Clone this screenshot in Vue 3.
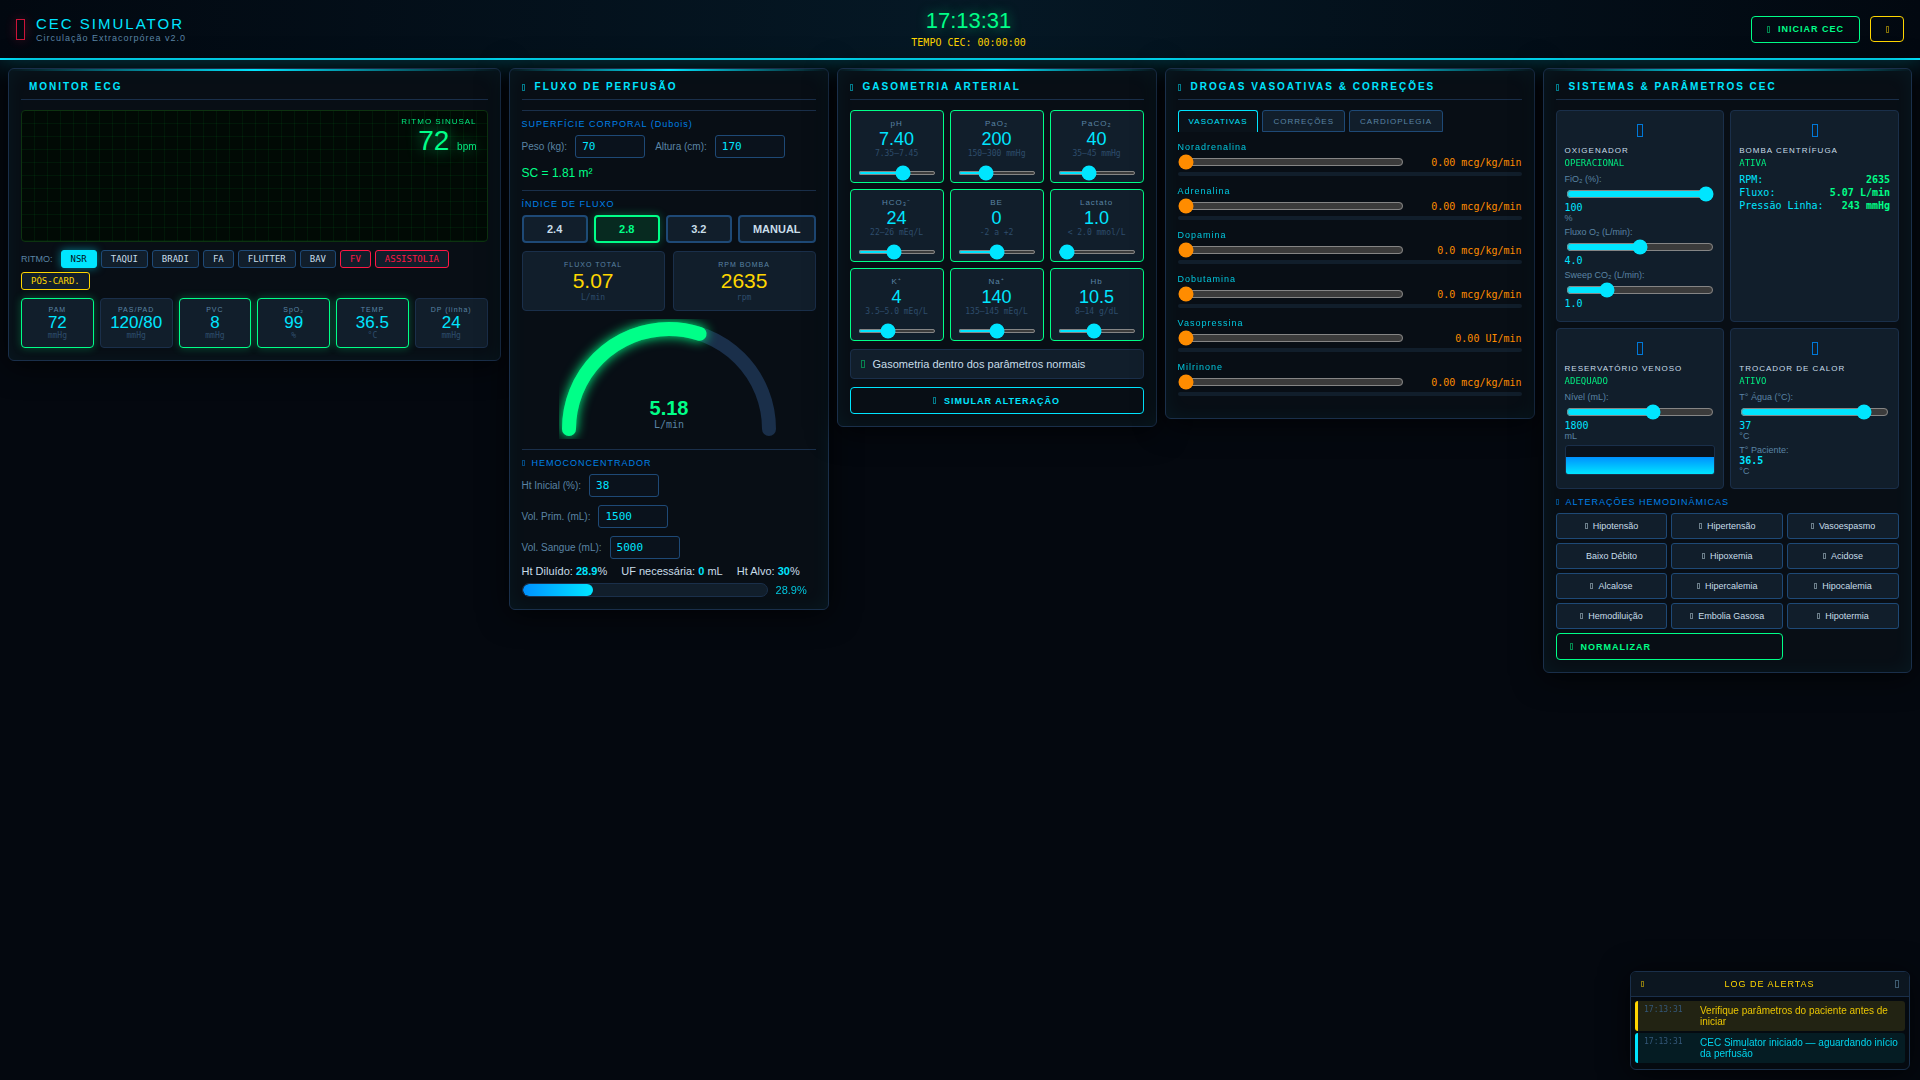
<script setup>
import { ref } from 'vue'

const rhythms = [
  { name: 'NSR', kind: 'active' },
  { name: 'TAQUI' },
  { name: 'BRADI' },
  { name: 'FA' },
  { name: 'FLUTTER' },
  { name: 'BAV' },
  { name: 'FV', kind: 'danger' },
  { name: 'ASSISTOLIA', kind: 'danger' },
  { name: 'PÓS-CARD.', kind: 'warn' },
]

const vitals = [
  { label: 'PAM', value: '72', unit: 'mmHg', ok: true },
  { label: 'PAS/PAD', value: '120/80', unit: 'mmHg' },
  { label: 'PVC', value: '8', unit: 'mmHg', ok: true },
  { label: 'SpO₂', value: '99', unit: '%', ok: true },
  { label: 'TEMP', value: '36.5', unit: '°C', ok: true },
  { label: 'DP (linha)', value: '24', unit: 'mmHg' },
]

const indexes = ['2.4', '2.8', '3.2', 'MANUAL']
const activeIndex = ref('2.8')

const body = ref({ weight: 70, height: 170 })
const hemo = ref([
  { id: 'ht', label: 'Ht Inicial (%):', value: 38 },
  { id: 'prim', label: 'Vol. Prim. (mL):', value: 1500 },
  { id: 'blood', label: 'Vol. Sangue (mL):', value: 5000 },
])
const diluted = 28.9

const gases = ref([
  { label: 'pH', text: '7.40', range: '7.35–7.45', value: 7.4, min: 6.8, max: 7.8 },
  { label: 'PaO₂', text: '200', range: '150–300 mmHg', value: 200, min: 50, max: 500 },
  { label: 'PaCO₂', text: '40', range: '35–45 mmHg', value: 40, min: 15, max: 80 },
  { label: 'HCO₃⁻', text: '24', range: '22–26 mEq/L', value: 24, min: 10, max: 40 },
  { label: 'BE', text: '0', range: '-2 a +2', value: 0, min: -15, max: 15 },
  { label: 'Lactato', text: '1.0', range: '< 2.0 mmol/L', value: 1, min: 0.5, max: 20 },
  { label: 'K⁺', text: '4', range: '3.5–5.0 mEq/L', value: 4, min: 1.5, max: 8.5 },
  { label: 'Na⁺', text: '140', range: '135–145 mEq/L', value: 140, min: 120, max: 160 },
  { label: 'Hb', text: '10.5', range: '8–14 g/dL', value: 10.5, min: 4, max: 18 },
])

const tabs = ['VASOATIVAS', 'CORREÇÕES', 'CARDIOPLEGIA']
const activeTab = ref('VASOATIVAS')

const drugs = ref([
  { name: 'Noradrenalina', text: '0.00 mcg/kg/min', dose: 0 },
  { name: 'Adrenalina', text: '0.00 mcg/kg/min', dose: 0 },
  { name: 'Dopamina', text: '0.0 mcg/kg/min', dose: 0 },
  { name: 'Dobutamina', text: '0.0 mcg/kg/min', dose: 0 },
  { name: 'Vasopressina', text: '0.00 UI/min', dose: 0 },
  { name: 'Milrinone', text: '0.00 mcg/kg/min', dose: 0 },
])

const systems = ref([
  {
    name: 'OXIGENADOR',
    status: 'OPERACIONAL',
    controls: [
      { id: 'fio2', label: 'FiO₂ (%):', value: 100, text: '100', unit: '%', min: 21, max: 100 },
      { id: 'o2', label: 'Fluxo O₂ (L/min):', value: 4, text: '4.0', min: 0, max: 8 },
      { id: 'sweep', label: 'Sweep CO₂ (L/min):', value: 1, text: '1.0', min: 0, max: 4 },
    ],
  },
  {
    name: 'BOMBA CENTRÍFUGA',
    status: 'ATIVA',
    controls: [],
    stats: [
      ['RPM:', '2635'],
      ['Fluxo:', '5.07 L/min'],
      ['Pressão Linha:', '243 mmHg'],
    ],
  },
  {
    name: 'RESERVATÓRIO VENOSO',
    status: 'ADEQUADO',
    controls: [
      { id: 'level', label: 'Nível (mL):', value: 1800, text: '1800', unit: 'mL', min: 0, max: 3000 },
    ],
    tank: 60,
  },
  {
    name: 'TROCADOR DE CALOR',
    status: 'ATIVO',
    controls: [
      { id: 'water', label: 'T° Água (°C):', value: 37, text: '37', unit: '°C', min: 4, max: 42 },
    ],
    patient: '36.5',
  },
])

const effects = [
  'Hipotensão', 'Hipertensão', 'Vasoespasmo',
  'Baixo Débito', 'Hipoxemia', 'Acidose',
  'Alcalose', 'Hipercalemia', 'Hipocalemia',
  'Hemodiluição', 'Embolia Gasosa', 'Hipotermia',
]

const alerts = [
  { time: '17:13:31', text: 'Verifique parâmetros do paciente antes de iniciar', kind: 'warn' },
  { time: '17:13:31', text: 'CEC Simulator iniciado — aguardando início da perfusão', kind: 'info' },
]
</script>

<template>
  <div class="app">
    <header class="topbar">
      <div class="brand">
        <i class="brand-mark"></i>
        <div>
          <h1>CEC SIMULATOR</h1>
          <p>Circulação Extracorpórea v2.0</p>
        </div>
      </div>
      <div class="clock">
        <div class="clock-time">17:13:31</div>
        <div class="clock-cec">TEMPO CEC: 00:00:00</div>
      </div>
      <div class="top-actions">
        <button type="button" class="btn green"><i class="glyph"></i>INICIAR CEC</button>
        <button type="button" class="btn yellow" aria-label="Reiniciar"><i class="glyph"></i></button>
      </div>
    </header>

    <main class="board">
      <section class="panel">
        <h2 class="panel-title">MONITOR ECG</h2>
        <div class="ecg">
          <div class="ecg-info">
            <div class="ecg-rhythm">RITMO SINUSAL</div>
            <div class="ecg-rate">72 <span>bpm</span></div>
          </div>
        </div>
        <div class="rhythms">
          <span class="rhythm-label">RITMO:</span>
          <button v-for="r in rhythms" :key="r.name" type="button" class="rhythm" :class="r.kind">{{ r.name }}</button>
        </div>
        <div class="vitals">
          <div v-for="v in vitals" :key="v.label" class="vital" :class="{ ok: v.ok }">
            <div class="vital-label">{{ v.label }}</div>
            <div class="vital-value">{{ v.value }}</div>
            <div class="vital-unit">{{ v.unit }}</div>
          </div>
        </div>
      </section>

      <section class="panel">
        <h2 class="panel-title"><i class="glyph"></i>FLUXO DE PERFUSÃO</h2>
        <div class="section">
          <h3 class="section-title">SUPERFÍCIE CORPORAL (Dubois)</h3>
          <div class="fields">
            <div class="field">
              <label for="weight">Peso (kg):</label>
              <input id="weight" v-model="body.weight" type="text" inputmode="numeric">
            </div>
            <div class="field">
              <label for="height">Altura (cm):</label>
              <input id="height" v-model="body.height" type="text" inputmode="numeric">
            </div>
          </div>
          <div class="surface">SC = 1.81 m²</div>
        </div>
        <div class="section">
          <h3 class="section-title">ÍNDICE DE FLUXO</h3>
          <div class="indexes">
            <button
              v-for="i in indexes"
              :key="i"
              type="button"
              class="index"
              :class="{ active: i === activeIndex }"
              @click="activeIndex = i"
            >{{ i }}</button>
          </div>
          <div class="metrics">
            <div class="metric">
              <div class="metric-label">FLUXO TOTAL</div>
              <div class="metric-value">5.07</div>
              <div class="metric-unit">L/min</div>
            </div>
            <div class="metric">
              <div class="metric-label">RPM BOMBA</div>
              <div class="metric-value">2635</div>
              <div class="metric-unit">rpm</div>
            </div>
          </div>
          <svg class="gauge" viewBox="0 0 220 120" width="220" height="120">
            <path d="M10 110 A100 100 0 0 1 210 110" fill="none" stroke="#1a2f4a" stroke-width="14" stroke-linecap="round" />
            <path class="gauge-fill" d="M10 110 A100 100 0 0 1 210 110" fill="none" stroke="#00ff88" stroke-width="14" stroke-linecap="round" stroke-dasharray="188 400" />
            <text x="110" y="96" class="gauge-value">5.18</text>
            <text x="110" y="109" class="gauge-unit">L/min</text>
          </svg>
        </div>
        <div class="section">
          <h3 class="section-title"><i class="glyph"></i>HEMOCONCENTRADOR</h3>
          <div class="hemo">
            <div v-for="h in hemo" :key="h.id" class="field">
              <label :for="h.id">{{ h.label }}</label>
              <input :id="h.id" v-model="h.value" type="text" inputmode="numeric">
            </div>
          </div>
          <div class="hemo-results">
            <span>Ht Diluído: <b>28.9</b>%</span>
            <span>UF necessária: <b>0</b> mL</span>
            <span>Ht Alvo: <b>30</b>%</span>
          </div>
          <div class="ht-row">
            <div class="ht-bar"><div class="ht-fill" :style="{ width: diluted + '%' }"></div></div>
            <span class="ht-pct">{{ diluted }}%</span>
          </div>
        </div>
      </section>

      <section class="panel">
        <h2 class="panel-title"><i class="glyph"></i>GASOMETRIA ARTERIAL</h2>
        <div class="gases">
          <div v-for="g in gases" :key="g.label" class="gas">
            <div class="gas-label">{{ g.label }}</div>
            <div class="gas-value">{{ g.text }}</div>
            <div class="gas-range">{{ g.range }}</div>
            <input v-model="g.value" type="range" step="any" :min="g.min" :max="g.max" :aria-label="g.label">
          </div>
        </div>
        <div class="gas-status"><i class="glyph large"></i>Gasometria dentro dos parâmetros normais</div>
        <button type="button" class="btn cyan wide"><i class="glyph"></i>SIMULAR ALTERAÇÃO</button>
      </section>

      <section class="panel">
        <h2 class="panel-title"><i class="glyph"></i>DROGAS VASOATIVAS &amp; CORREÇÕES</h2>
        <div class="tabs">
          <button
            v-for="t in tabs"
            :key="t"
            type="button"
            class="tab"
            :class="{ active: t === activeTab }"
            @click="activeTab = t"
          >{{ t }}</button>
        </div>
        <div v-for="d in drugs" :key="d.name" class="drug">
          <label class="drug-name" :for="d.name">{{ d.name }}</label>
          <div class="drug-row">
            <input :id="d.name" v-model="d.dose" type="range" min="0" max="100">
            <span class="drug-dose">{{ d.text }}</span>
          </div>
          <div class="drug-bar"></div>
        </div>
      </section>

      <section class="panel">
        <h2 class="panel-title"><i class="glyph"></i>SISTEMAS &amp; PARÂMETROS CEC</h2>
        <div class="systems">
          <div v-for="s in systems" :key="s.name" class="system">
            <div class="system-icon"><i></i></div>
            <div class="system-name">{{ s.name }}</div>
            <div class="system-status">{{ s.status }}</div>
            <div v-if="s.controls.length" class="controls">
              <div v-for="c in s.controls" :key="c.id" class="control">
                <label :for="c.id">{{ c.label }}</label>
                <input :id="c.id" v-model="c.value" type="range" step="any" :min="c.min" :max="c.max">
                <div class="control-value">{{ c.text }}</div>
                <div v-if="c.unit" class="control-unit">{{ c.unit }}</div>
              </div>
              <div v-if="s.tank" class="tank"><div class="tank-fill" :style="{ height: s.tank + '%' }"></div></div>
              <div v-if="s.patient" class="control">
                <div class="control-unit">T° Paciente:</div>
                <div class="control-value strong">{{ s.patient }}</div>
                <div class="control-unit">°C</div>
              </div>
            </div>
            <div v-if="s.stats" class="stats">
              <div v-for="st in s.stats" :key="st[0]" class="stat"><span>{{ st[0] }}</span><b>{{ st[1] }}</b></div>
            </div>
          </div>
        </div>
        <h3 class="section-title effects-title"><i class="glyph"></i>ALTERAÇÕES HEMODINÂMICAS</h3>
        <div class="effects">
          <button v-for="e in effects" :key="e" type="button" class="effect">
            <i v-if="e !== 'Baixo Débito'" class="glyph"></i>{{ e }}
          </button>
          <button type="button" class="btn green normalize"><i class="glyph"></i>NORMALIZAR</button>
        </div>
      </section>
    </main>

    <aside class="log">
      <div class="log-head">
        <i class="glyph"></i>
        <span>LOG DE ALERTAS</span>
        <button type="button" class="log-toggle" aria-label="Recolher"><i class="glyph large"></i></button>
      </div>
      <div class="log-list">
        <div v-for="a in alerts" :key="a.text" class="alert" :class="a.kind">
          <span class="alert-time">{{ a.time }}</span>
          <span class="alert-text">{{ a.text }}</span>
        </div>
      </div>
    </aside>
  </div>
</template>

<style>
body {
  background: #04080f;
}
</style>

<style scoped>
.app {
  --cyan: #00e5ff;
  --green: #00ff88;
  --yellow: #ffd600;
  --red: #ff1744;
  --blue: #0091ff;
  --orange: #ff8c00;
  --line: #1a2f4a;
  --line-strong: #1e4976;
  --card: #111e2b;
  --text: #c8dde9;
  --muted: #5a84a4;
  --dim: #2e4d6c;
  --mono: "DejaVu Sans Mono", monospace;
  min-height: 100vh;
  color: var(--text);
  font-family: "Liberation Sans", Arial, sans-serif;
}
.app * { box-sizing: border-box; }
h1, h2, h3, p { margin: 0; font-weight: 400; }
button { font-family: inherit; cursor: pointer; }
input[type="range"] { accent-color: var(--cyan); }

.glyph {
  display: inline-block;
  flex: none;
  width: 3px;
  height: 7px;
  border: 1px solid currentColor;
  opacity: 0.5;
}
.glyph.large { width: 4px; height: 8px; }

.topbar {
  display: flex;
  align-items: center;
  justify-content: space-between;
  height: 60px;
  padding: 0 16px;
  border-bottom: 2px solid var(--cyan);
  background: linear-gradient(90deg, #020810, #051825 50%, #020810);
  box-shadow: 0 0 30px rgba(0, 229, 255, 0.3);
}
.brand { display: flex; align-items: center; gap: 11px; }
.brand-mark {
  width: 9px;
  height: 21px;
  border: 1px solid var(--red);
  box-shadow: 0 0 12px rgba(255, 23, 68, 0.3);
  opacity: 0.8;
}
.brand h1 { font-size: 15px; line-height: 19px; letter-spacing: 2px; color: var(--cyan); }
.brand p { font-size: 9px; line-height: 11px; letter-spacing: 1px; color: var(--muted); }
.clock { text-align: center; }
.clock-time {
  font-size: 22px;
  line-height: 28px;
  color: var(--green);
  text-shadow: 0 0 12px rgba(0, 255, 136, 0.6);
}
.clock-cec { font-family: var(--mono); font-size: 10px; line-height: 16px; color: var(--yellow); }
.top-actions { display: flex; align-items: center; gap: 10px; }

.btn {
  display: flex;
  align-items: center;
  justify-content: center;
  gap: 8px;
  height: 27px;
  padding: 0 15px;
  border: 1px solid currentColor;
  border-radius: 4px;
  background: transparent;
  font-size: 9px;
  font-weight: 700;
  letter-spacing: 1px;
}
.btn.green { color: var(--green); }
.btn.yellow { width: 34px; height: 26px; padding: 0; color: var(--yellow); }
.btn.cyan { color: var(--cyan); }
.btn.wide { width: 100%; }

.board {
  display: grid;
  grid-template-columns: 4fr 320px 320px 370px 3fr;
  align-items: start;
  gap: 8px;
  padding: 8px;
}
.panel {
  position: relative;
  min-width: 0;
  padding: 12px;
  border: 1px solid var(--line);
  border-radius: 6px;
  background: #080e15;
  box-shadow: 0 4px 30px rgba(0, 0, 0, 0.7), inset 0 1px 20px rgba(0, 229, 255, 0.05);
}
.panel::before {
  content: "";
  position: absolute;
  top: 0;
  left: 0;
  right: 0;
  height: 2px;
  background: linear-gradient(90deg, transparent, var(--cyan), transparent);
}
.panel-title {
  display: flex;
  align-items: center;
  margin-bottom: 10px;
  padding-bottom: 6px;
  border-bottom: 1px solid var(--line);
  font-size: 10px;
  font-weight: 700;
  line-height: 12px;
  letter-spacing: 2px;
  color: var(--cyan);
}
.panel-title .glyph { margin-right: 10px; }
.panel-title:not(:has(.glyph)) { padding-left: 8px; }
.panel-title:not(:has(.glyph)) { padding-left: 0; text-indent: 8px; }

.ecg {
  height: 132px;
  padding: 6px 10px;
  border: 1px solid #0d3310;
  border-radius: 4px;
  background:
    linear-gradient(transparent 12px, rgba(0, 255, 60, 0.06) 12px) 0 0 / 13px 13px,
    linear-gradient(90deg, transparent 12px, rgba(0, 255, 60, 0.06) 12px) 0 0 / 13px 13px,
    #010a05;
  color: var(--green);
}
.ecg-info { text-align: right; }
.ecg-rhythm { font-size: 8px; line-height: 10px; letter-spacing: 1px; opacity: 0.9; }
.ecg-rate { font-size: 28px; line-height: 28px; text-shadow: 0 0 15px rgba(0, 255, 136, 0.8); }
.ecg-rate span { font-size: 10px; opacity: 0.9; }

.rhythms { display: flex; flex-wrap: wrap; align-items: center; gap: 4px; margin: 8px 0; }
.rhythm-label { margin-right: 4px; font-size: 9px; color: var(--muted); }
.rhythm {
  height: 18px;
  padding: 0 9px;
  border: 1px solid var(--line-strong);
  border-radius: 3px;
  background: var(--card);
  color: var(--text);
  font-family: var(--mono);
  font-size: 9px;
}
.rhythm.active {
  border-color: var(--cyan);
  background: var(--cyan);
  color: #001018;
  box-shadow: 0 0 8px rgba(0, 229, 255, 0.5);
}
.rhythm.danger { border-color: var(--red); color: var(--red); }
.rhythm.warn { border-color: var(--yellow); color: var(--yellow); }

.vitals { display: grid; grid-template-columns: repeat(6, 1fr); gap: 6px; }
.vital {
  min-width: 0;
  padding: 6px 0;
  border: 1px solid var(--line);
  border-radius: 4px;
  background: var(--card);
  text-align: center;
}
.vital.ok { border-color: var(--green); box-shadow: 0 0 8px rgba(0, 255, 136, 0.3); }
.vital-label { font-size: 7px; line-height: 9px; letter-spacing: 1px; color: var(--muted); }
.vital-value { font-size: 17px; line-height: 17px; color: var(--cyan); }
.vital-unit { font-family: var(--mono); font-size: 8px; line-height: 10px; color: var(--dim); }

.section { padding: 8px 0 10px; border-top: 1px solid var(--line); }
.section:last-child { padding-bottom: 0; }
.section-title {
  display: flex;
  align-items: center;
  margin-bottom: 6px;
  font-size: 9px;
  line-height: 10px;
  letter-spacing: 1px;
  color: #0080e6;
}
.section-title .glyph { height: 6px; margin-right: 7px; }
.fields { display: flex; gap: 10px; }
.field { display: flex; align-items: center; gap: 8px; }
.field label { font-size: 10px; color: var(--muted); }
.field input {
  width: 70px;
  height: 23px;
  padding: 0 6px;
  border: 1px solid var(--line-strong);
  border-radius: 3px;
  background: #0a121c;
  color: var(--cyan);
  font-family: var(--mono);
  font-size: 11px;
}
.surface { margin-top: 8px; font-size: 12px; line-height: 14px; color: var(--green); }
.indexes { display: flex; gap: 6px; }
.index {
  flex: 1;
  height: 28px;
  padding: 0 13px;
  border: 2px solid var(--line-strong);
  border-radius: 4px;
  background: var(--card);
  color: var(--text);
  font-size: 11px;
  font-weight: 700;
}
.index.active {
  border-color: var(--green);
  background: #072a20;
  color: var(--green);
  box-shadow: 0 0 10px rgba(0, 255, 136, 0.3);
}
.metrics { display: grid; grid-template-columns: 1fr 1fr; gap: 8px; margin: 8px 0; }
.metric {
  padding: 8px 0;
  border: 1px solid var(--line);
  border-radius: 4px;
  background: var(--card);
  text-align: center;
}
.metric-label { font-size: 7px; line-height: 9px; letter-spacing: 1px; color: var(--muted); }
.metric-value { font-size: 21px; line-height: 24px; color: var(--yellow); }
.metric-unit { font-family: var(--mono); font-size: 8px; line-height: 9px; color: var(--dim); }
.gauge { display: block; margin: 0 auto; overflow: hidden; }
.gauge-fill { filter: drop-shadow(0 0 6px #00ff88); }
.gauge-value { fill: var(--green); font-size: 20px; font-weight: 700; text-anchor: middle; }
.gauge-unit { fill: var(--muted); font-family: var(--mono); font-size: 10px; text-anchor: middle; }
.hemo { display: flex; flex-direction: column; gap: 8px; }
.hemo-results { display: flex; gap: 14px; margin: 6px 0; font-size: 11px; line-height: 12px; white-space: nowrap; }
.hemo-results b { color: var(--cyan); }
.ht-row { display: flex; align-items: center; gap: 8px; }
.ht-bar {
  flex: 1;
  height: 14px;
  overflow: hidden;
  border: 1px solid var(--line);
  border-radius: 7px;
  background: var(--card);
}
.ht-fill { height: 100%; border-radius: 6px; background: linear-gradient(90deg, var(--blue), var(--cyan)); }
.ht-pct { width: 40px; font-size: 11px; line-height: 12px; color: var(--cyan); opacity: 0.85; }

.gases { display: grid; grid-template-columns: repeat(3, 1fr); gap: 6px; }
.gas {
  min-width: 0;
  padding: 8px 7px 7px;
  border: 1px solid var(--green);
  border-radius: 4px;
  background: var(--card);
  text-align: center;
}
.gas-label { font-size: 8px; line-height: 10px; letter-spacing: 1px; color: var(--muted); }
.gas-value { font-size: 18px; line-height: 20px; color: var(--cyan); }
.gas-range { font-family: var(--mono); font-size: 8px; line-height: 9px; color: var(--dim); white-space: nowrap; }
.gas input { display: block; width: 100%; height: 4px; margin: 13px 0 0; }
.gas-status {
  display: flex;
  align-items: center;
  gap: 8px;
  height: 30px;
  margin: 8px 0;
  padding: 0 10px;
  border: 1px solid var(--line);
  border-radius: 4px;
  background: var(--card);
  font-size: 11px;
}
.gas-status .glyph { color: #00e676; }

.tabs { display: flex; gap: 4px; margin-bottom: 10px; }
.tab {
  height: 22px;
  padding: 0 10px;
  border: 1px solid var(--line-strong);
  border-radius: 3px 3px 0 0;
  background: var(--card);
  color: var(--muted);
  font-size: 8px;
  letter-spacing: 1px;
}
.tab.active { border-color: var(--cyan); border-bottom: 0; background: #0a121a; color: var(--cyan); }
.drug { margin-bottom: 10px; }
.drug-name { display: block; font-size: 9px; line-height: 10px; letter-spacing: 1px; color: var(--cyan); opacity: 0.85; }
.drug-row { display: flex; align-items: center; gap: 8px; height: 16px; margin: 2px 0; }
.drug-row input { flex: 1; min-width: 0; margin: 0; accent-color: var(--orange); }
.drug-dose { width: 110px; font-family: var(--mono); font-size: 10px; text-align: right; color: var(--orange); }
.drug-bar { height: 4px; border-radius: 2px; background: var(--card); }

.systems { display: grid; grid-template-columns: 1fr 1fr; gap: 6px; }
.system {
  min-width: 0;
  padding: 8px;
  border: 1px solid var(--line);
  border-radius: 4px;
  background: var(--card);
}
.system-icon { display: flex; align-items: center; justify-content: center; height: 23px; margin-bottom: 4px; }
.system-icon i { width: 6px; height: 13px; border: 1px solid #0078d8; }
.system-name { font-size: 8px; line-height: 10px; letter-spacing: 1px; }
.system-status { margin-top: 2px; font-family: var(--mono); font-size: 9px; line-height: 10px; color: var(--green); opacity: 0.9; }
.controls { margin-top: 6px; }
.control { margin-bottom: 4px; }
.control label { display: block; font-size: 9px; line-height: 10px; color: var(--muted); }
.control input { display: block; width: calc(100% - 2px); height: 16px; margin: 2px 1px 0; }
.control-value { font-family: var(--mono); font-size: 10px; line-height: 11px; color: var(--cyan); }
.control-value.strong { font-weight: 700; }
.control-unit { font-size: 9px; line-height: 10px; color: var(--muted); }
.tank {
  display: flex;
  align-items: flex-end;
  height: 30px;
  overflow: hidden;
  border: 1px solid var(--line);
  border-radius: 3px;
  background: #0a121c;
}
.tank-fill { width: 100%; background: linear-gradient(var(--blue), var(--cyan)); }
.stats { margin-top: 5px; }
.stat { display: flex; justify-content: space-between; font-family: var(--mono); font-size: 10px; line-height: 13px; color: var(--cyan); }
.stat b { color: var(--green); }

.effects-title { margin-top: 8px; }
.effects { display: grid; grid-template-columns: repeat(3, 1fr); gap: 4px; }
.effect {
  display: flex;
  align-items: center;
  justify-content: center;
  gap: 5px;
  height: 26px;
  padding: 0;
  border: 1px solid var(--line-strong);
  border-radius: 3px;
  background: var(--card);
  color: var(--text);
  font-size: 9px;
}
.effect .glyph { height: 6px; }
.normalize { grid-column: span 2; justify-content: flex-start; padding: 0 13px; }

.log {
  position: fixed;
  right: 10px;
  bottom: 10px;
  width: 280px;
  border: 1px solid var(--line);
  border-radius: 6px;
  background: #050a10;
  box-shadow: 0 4px 30px rgba(0, 0, 0, 0.7);
}
.log-head {
  display: flex;
  align-items: center;
  justify-content: space-between;
  height: 25px;
  padding: 0 10px;
  border-bottom: 1px solid var(--line);
  border-radius: 5px 5px 0 0;
  background: #0c1620;
  color: var(--yellow);
  font-size: 9px;
  letter-spacing: 1px;
}
.log-head > .glyph { height: 6px; }
.log-toggle { display: flex; padding: 0; border: 0; background: none; color: #6f9fc0; }
.log-list { display: flex; flex-direction: column; gap: 2px; padding: 4px 4px 6px; }
.alert {
  display: flex;
  padding: 4px 6px;
  border-left: 3px solid currentColor;
  border-radius: 3px;
  font-size: 10px;
  line-height: 11px;
}
.alert.warn { background: #222313; color: var(--yellow); }
.alert.info { background: #051c23; color: var(--cyan); }
.alert-text { opacity: 0.9; }
.alert-time { flex: none; width: 56px; font-family: var(--mono); font-size: 8px; line-height: 10px; color: #34587a; }
</style>
